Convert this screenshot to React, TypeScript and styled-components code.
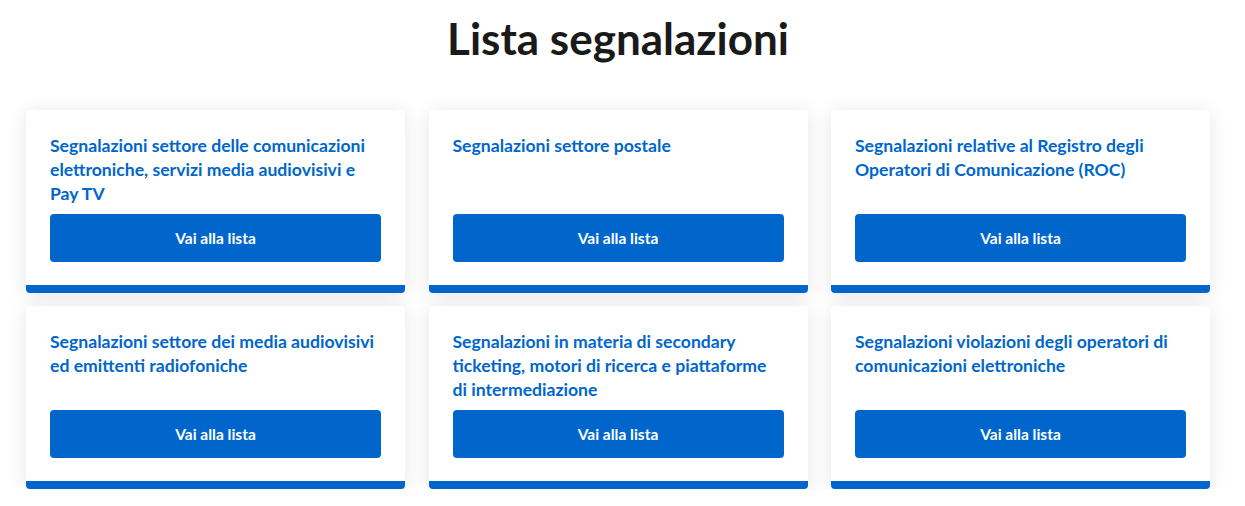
import React from "react";
import styled, { createGlobalStyle } from "styled-components";

const Global = createGlobalStyle`
  html, body { margin: 0; padding: 0; background: #fff; }
  body { font-family: Lato, "Liberation Sans", sans-serif; color: #1a1a1a; }
  * { box-sizing: border-box; }
`;

const Page = styled.main`
  width: 1236px;
  padding: 12px 26px 0;
`;

const Heading = styled.h1`
  margin: 0 0 46px;
  text-align: center;
  font-size: 44px;
  line-height: 52px;
  font-weight: 700;
  color: #1a1a1a;
`;

const Grid = styled.div`
  display: grid;
  grid-template-columns: repeat(3, 379px);
  column-gap: 23.5px;
  row-gap: 13px;
`;

const Card = styled.article`
  display: flex;
  flex-direction: column;
  background: #fff;
  border-radius: 4px;
  border-bottom: 8px solid #0066cc;
  padding: 24px 24px 23px;
  box-shadow: 0 2px 20px rgba(0, 0, 0, 0.1);
`;

const Title = styled.h3`
  margin: 0 0 8px;
  font-size: 17.6px;
  line-height: 24px;
  font-weight: 700;
  color: #0066cc;
`;

const Button = styled.a`
  margin-top: auto;
  display: flex;
  align-items: center;
  justify-content: center;
  height: 48px;
  width: 331px;
  border-radius: 4px;
  background: #0066cc;
  color: #fff;
  font-size: 15.5px;
  font-weight: 700;
  text-decoration: none;
`;

const items = [
  "Segnalazioni settore delle comunicazioni elettroniche, servizi media audiovisivi e Pay TV",
  "Segnalazioni settore postale",
  "Segnalazioni relative al Registro degli Operatori di Comunicazione (ROC)",
  "Segnalazioni settore dei media audiovisivi ed emittenti radiofoniche",
  "Segnalazioni in materia di secondary ticketing, motori di ricerca e piattaforme di intermediazione",
  "Segnalazioni violazioni degli operatori di comunicazioni elettroniche",
];

export default function App() {
  return (
    <>
      <Global />
      <Page>
        <Heading>Lista segnalazioni</Heading>
        <Grid>
          {items.map((t) => (
            <Card key={t}>
              <Title>{t}</Title>
              <Button href="#">Vai alla lista</Button>
            </Card>
          ))}
        </Grid>
      </Page>
    </>
  );
}
